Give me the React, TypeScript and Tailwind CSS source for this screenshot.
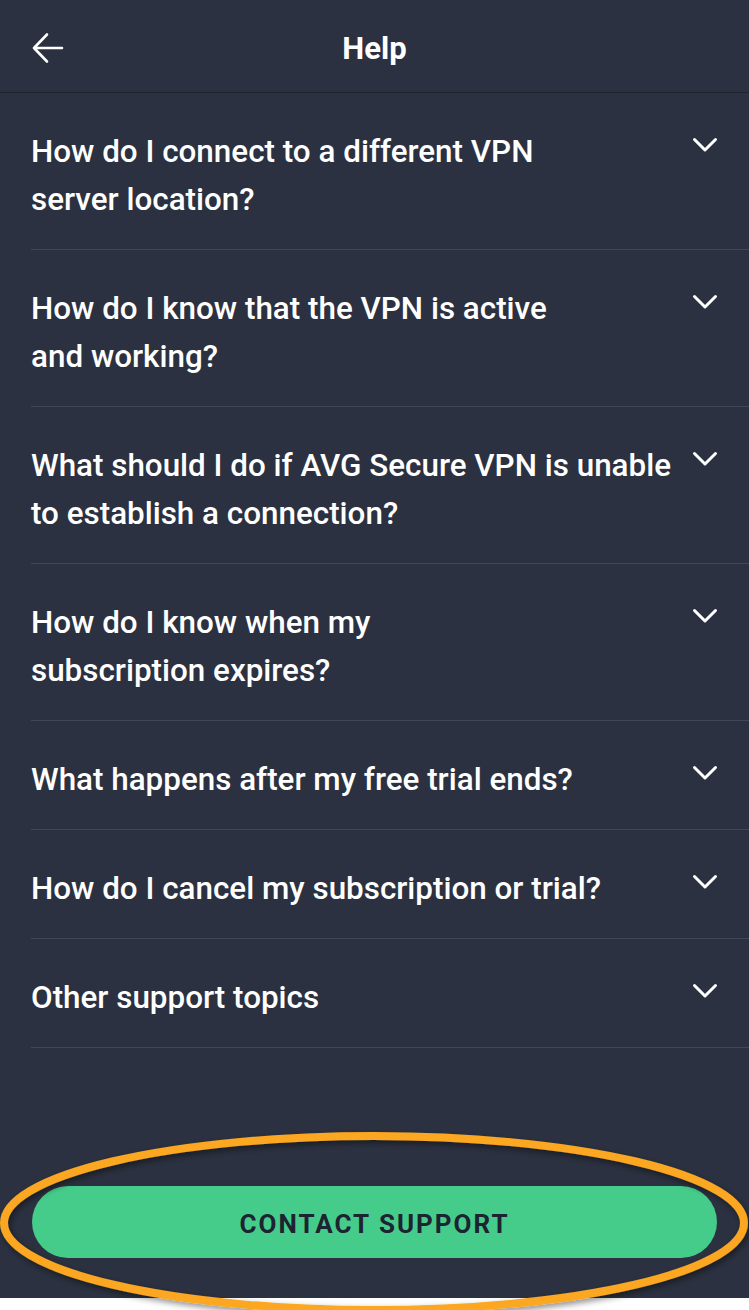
import React from "react";

const questions: string[][] = [
  ["How do I connect to a different VPN", "server location?"],
  ["How do I know that the VPN is active", "and working?"],
  ["What should I do if AVG Secure VPN is unable", "to establish a connection?"],
  ["How do I know when my", "subscription expires?"],
  ["What happens after my free trial ends?"],
  ["How do I cancel my subscription or trial?"],
  ["Other support topics"],
];

function BackArrow() {
  return (
    <svg width="32" height="32" viewBox="0 0 32 32" fill="none">
      <path d="M30 16H2.5M15 2.5L2 16l13 13.5" stroke="white" strokeWidth="2.6" strokeLinecap="round" strokeLinejoin="round" />
    </svg>
  );
}

function Chevron() {
  return (
    <svg width="26" height="16" viewBox="0 0 26 16" fill="none">
      <path d="M2.5 2.5L13 13l10.5-10.5" stroke="white" strokeWidth="3" strokeLinecap="round" strokeLinejoin="round" />
    </svg>
  );
}

export default function App() {
  return (
    <div className="relative w-[749px] h-[1310px] bg-white overflow-hidden" style={{ fontFamily: "Roboto, 'Noto Sans', sans-serif" }}>
      <div className="flex flex-col h-[1298px] bg-[#2b3140]">
        {/* header */}
        <div className="relative flex items-center justify-center h-[93px] border-b border-[#1e232d] shrink-0">
          <div className="absolute left-[32px] top-[32px]">
            <BackArrow />
          </div>
          <h1 className="text-white font-bold text-[31px] leading-none mt-[4px]">Help</h1>
        </div>

        {/* question list */}
        <div className="flex flex-col">
          {questions.map((lines, i) => (
            <div key={i} className="ml-[31px] flex items-start justify-between border-b border-[#404756] pt-[35px] pb-[25px] pr-[31px]">
              <p className="text-white font-medium text-[31.4px] leading-[48px]">
                {lines.map((l, j) => (
                  <React.Fragment key={j}>
                    {l}
                    {j < lines.length - 1 && <br />}
                  </React.Fragment>
                ))}
              </p>
              <div className="pt-[9px] shrink-0">
                <Chevron />
              </div>
            </div>
          ))}
        </div>

        <div className="flex-1" />

        {/* contact button */}
        <div className="px-[32px] pb-[40px]">
          <button className="w-full h-[72px] pt-[5px] rounded-full bg-[#45cc8a] text-[#1d2330] font-bold text-[26px] tracking-[2px]">
            CONTACT SUPPORT
          </button>
        </div>
      </div>

      {/* annotation ellipse */}
      <svg className="absolute left-0 top-[1120px] pointer-events-none" width="749" height="190" viewBox="0 0 749 190" fill="none">
        <defs>
          <filter id="sh" x="-5%" y="-20%" width="110%" height="140%">
            <feDropShadow dx="2" dy="3" stdDeviation="3" floodColor="#000" floodOpacity="0.45" />
          </filter>
        </defs>
        <ellipse cx="374" cy="103" rx="370" ry="87" stroke="#fca722" strokeWidth="8" filter="url(#sh)" />
      </svg>
    </div>
  );
}
